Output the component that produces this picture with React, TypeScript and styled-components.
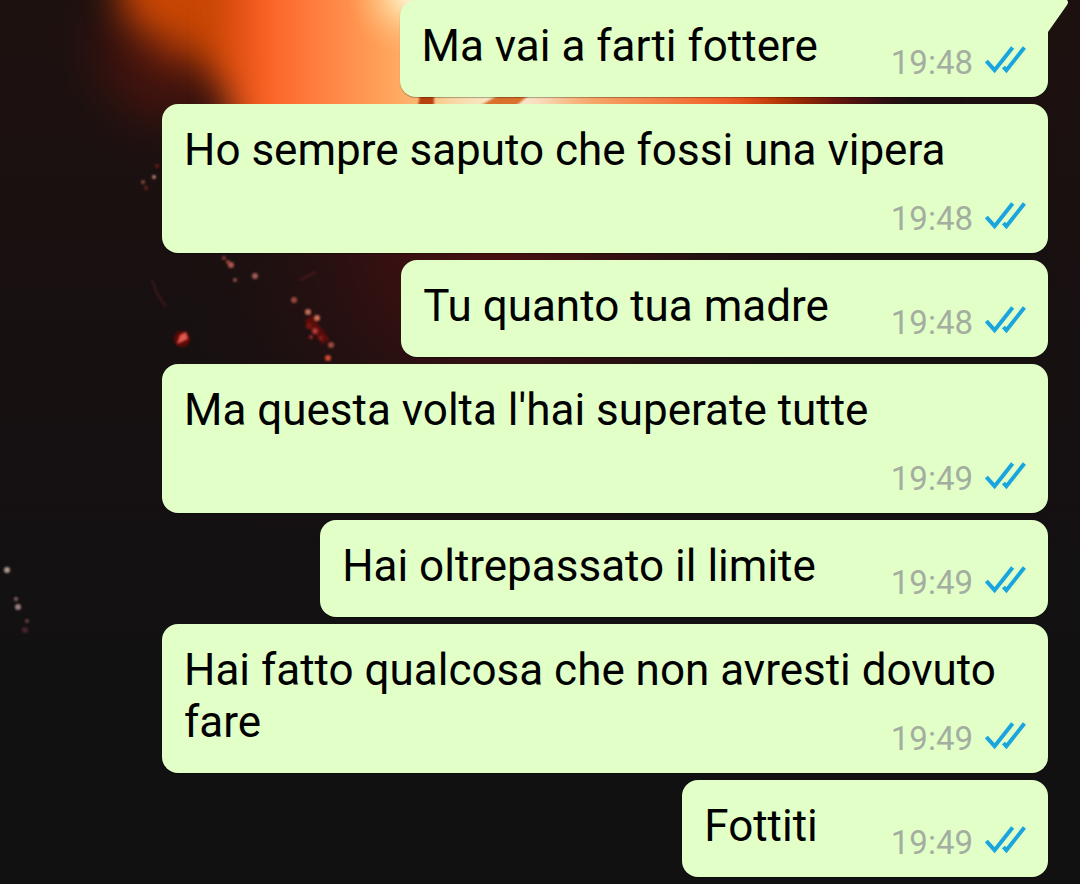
import React from "react";
import styled, { createGlobalStyle } from "styled-components";

const GlobalStyle = createGlobalStyle`
  * { box-sizing: border-box; }
  body { margin: 0; background: #121112; font-family: Roboto, "Liberation Sans", sans-serif; }
`;

const Chat = styled.main`
  position: relative;
  min-height: 100vh;
  overflow: hidden;
  padding: 0 32px 7px 162px;
`;

const Wallpaper = styled.svg`
  position: absolute;
  inset: 0;
  width: 100%;
  height: 100%;
`;

const MessageList = styled.ol`
  position: relative;
  display: flex;
  flex-direction: column;
  align-items: flex-end;
  gap: 7px;
  margin: 0;
  padding: 0;
  list-style: none;
`;

const Bubble = styled.li`
  position: relative;
  display: flow-root;
  padding: 20px 21px 13px 22px;
  border-radius: 16px;
  background: #e1ffc7;
  color: #000;
  font-size: 44px;
  line-height: 52px;
  box-shadow: 0 1px 1px rgba(0, 0, 0, 0.3);
`;

const Tail = styled.svg`
  position: absolute;
  top: 0;
  left: calc(100% - 20px);
  width: 40px;
  height: 32px;
`;

const Meta = styled.span<{ $space: number }>`
  float: right;
  display: flex;
  align-items: center;
  gap: 12px;
  height: 64px;
  padding-top: 22px;
  margin-left: ${(p) => p.$space}px;
  color: #a3aea0;
  font-size: 33px;
  line-height: 36px;
`;

const Ticks = styled.svg`
  width: 42px;
  height: 28px;
  margin-bottom: 6px;
`;

type Message = { text: string; time: string; space?: number };

const messages: Message[] = [
  { text: "Ma vai a farti fottere", time: "19:48" },
  { text: "Ho sempre saputo che fossi una vipera", time: "19:48" },
  { text: "Tu quanto tua madre", time: "19:48", space: 62 },
  { text: "Ma questa volta l'hai superate tutte", time: "19:49" },
  { text: "Hai oltrepassato il limite", time: "19:49", space: 75 },
  { text: "Hai fatto qualcosa che non avresti dovuto fare", time: "19:49" },
  { text: "Fottiti", time: "19:49" },
];

const sparks: [number, number, number, string][] = [
  [154, 177, 2, "#c08078"], [143, 182, 2, "#8a4a44"], [146, 188, 2, "#6a2420"], [157, 166, 2, "#701a16"],
  [224, 258, 2, "#8a3a34"], [231, 265, 3, "#b05a50"], [228, 262, 2, "#a04840"], [235, 280, 2, "#985048"], [255, 276, 3, "#a05c58"],
  [294, 300, 3, "#9a4a40"], [308, 312, 3, "#c07058"], [317, 318, 3, "#d07058"], [309, 326, 3, "#7a1612"],
  [315, 331, 3, "#b03a36"], [311, 337, 2, "#a02a26"], [321, 338, 2, "#8a2420"], [331, 345, 3, "#a04a3c"], [328, 358, 3, "#d04830"],
  [7, 570, 3, "#b09a90"], [16, 599, 2, "#8a6868"],
  [18, 607, 3, "#a08080"], [27, 621, 2, "#6a4444"], [25, 630, 3, "#4a2430"],
];

function Background() {
  return (
    <Wallpaper viewBox="0 0 1080 884" preserveAspectRatio="xMidYMin slice" aria-hidden="true">
      <defs>
        <linearGradient id="dusk" x1="0" y1="0" x2="0" y2="1">
          <stop offset="0" stopColor="#1d110f" />
          <stop offset="0.4" stopColor="#171011" />
          <stop offset="0.75" stopColor="#121112" />
          <stop offset="1" stopColor="#111" />
        </linearGradient>
        <linearGradient id="flame" x1="200" y1="0" x2="900" y2="0" gradientUnits="userSpaceOnUse">
          <stop offset="0" stopColor="#c84408" />
          <stop offset="0.08" stopColor="#fa5c1e" />
          <stop offset="0.16" stopColor="#ff7c3e" />
          <stop offset="0.27" stopColor="#ffa45c" />
          <stop offset="0.31" stopColor="#ffb46c" />
          <stop offset="0.36" stopColor="#f6dca8" />
          <stop offset="0.46" stopColor="#faf0dc" />
          <stop offset="0.55" stopColor="#f6a868" />
          <stop offset="0.77" stopColor="#f05a22" />
          <stop offset="0.83" stopColor="#b03400" />
          <stop offset="0.92" stopColor="#5a1210" />
          <stop offset="1" stopColor="#1b1010" />
        </linearGradient>
        <radialGradient id="ember" cx="500" cy="230" r="340" gradientUnits="userSpaceOnUse">
          <stop offset="0" stopColor="#4c1010" />
          <stop offset="0.35" stopColor="#381011" stopOpacity="0.9" />
          <stop offset="1" stopColor="#1b1010" stopOpacity="0" />
        </radialGradient>
        <radialGradient id="smoke" cx="170" cy="50" r="120" gradientUnits="userSpaceOnUse">
          <stop offset="0" stopColor="#5e1a0c" />
          <stop offset="0.5" stopColor="#3c120e" stopOpacity="0.8" />
          <stop offset="1" stopColor="#1d110f" stopOpacity="0" />
        </radialGradient>
        <radialGradient id="core" cx="408" cy="-4" r="60" gradientUnits="userSpaceOnUse">
          <stop offset="0" stopColor="#fff6dc" />
          <stop offset="0.3" stopColor="#ffe0a8" stopOpacity="0.8" />
          <stop offset="1" stopColor="#ffb46c" stopOpacity="0" />
        </radialGradient>
        <filter id="soft" x="-50%" y="-50%" width="200%" height="200%" colorInterpolationFilters="sRGB">
          <feGaussianBlur stdDeviation="18" />
        </filter>
        <filter id="glint" x="-5%" y="-5%" width="110%" height="110%" colorInterpolationFilters="sRGB">
          <feGaussianBlur stdDeviation="1" />
        </filter>
      </defs>
      <rect width="1080" height="884" fill="url(#dusk)" />
      <rect x="150" y="0" width="700" height="600" fill="url(#ember)" />
      <rect width="300" height="200" fill="url(#smoke)" />
      <path d="M120 -60H270V100L222 86Q198 50 160 40Q130 28 120 0Z" fill="#c84604" filter="url(#soft)" />
      <path d="M230 -80H920V150H230Z" fill="url(#flame)" filter="url(#soft)" />
      <rect x="340" width="130" height="60" fill="url(#core)" />
      <g filter="url(#glint)">
        <path d="M420 94H434V106H418Z" fill="#b8400c" />
        <path d="M500 94H530L516 106H480Z" fill="#d9702c" />
        <circle cx="182" cy="339" r="8" fill="#600806" />
        <path d="M177 344L180 335L186 332L188 339Z" fill="#e05a50" />
        <path d="M152 280L157 293L166 307" stroke="#351719" strokeWidth="3" fill="none" />
        <path d="M300 280L316 272" stroke="#401819" strokeWidth="3" />
        <path d="M308 318L326 342" stroke="#5a0d0a" strokeWidth="9" />
        {sparks.map(([x, y, r, fill]) => <circle key={`${x}-${y}`} cx={x} cy={y} r={r} fill={fill} />)}
      </g>
    </Wallpaper>
  );
}

function ReadTicks() {
  return (
    <Ticks viewBox="0 0 42 28" fill="none" stroke="#1ba5de" strokeWidth="4" role="img" aria-label="Letto">
      <path d="M1.4 15L9.6 24.2L27.6 1.6M18.4 21L21.4 24.2L39.4 1.6" />
    </Ticks>
  );
}

export default function App() {
  return (
    <>
      <GlobalStyle />
      <Chat>
        <Background />
        <MessageList>
          {messages.map((message, index) => (
            <Bubble key={message.text}>
              {index === 0 && (
                <Tail viewBox="0 0 40 32" aria-hidden="true">
                  <path d="M0 0H39Q41 2 39 5L20 32H0Z" fill="#e1ffc7" />
                </Tail>
              )}
              {message.text}
              <Meta $space={message.space ?? 73}>
                <time>{message.time}</time>
                <ReadTicks />
              </Meta>
            </Bubble>
          ))}
        </MessageList>
      </Chat>
    </>
  );
}
